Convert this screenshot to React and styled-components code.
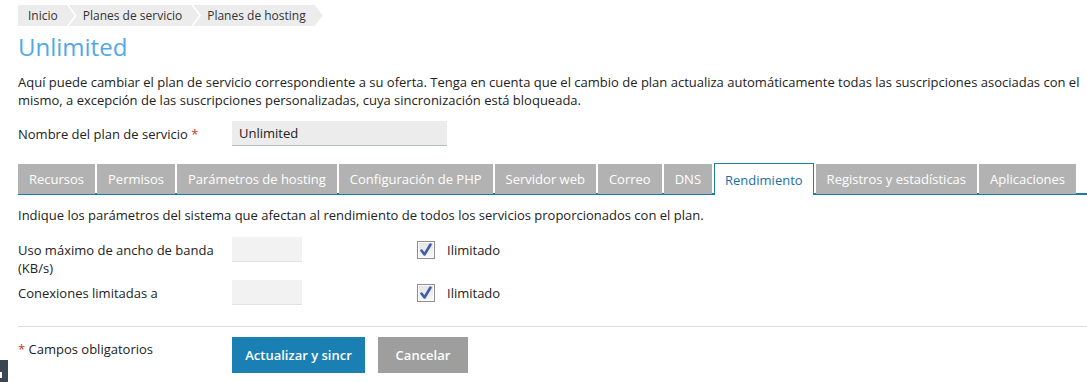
import React from "react";
import styled, { createGlobalStyle } from "styled-components";

const Global = createGlobalStyle`
  html, body { margin: 0; padding: 0; background: #fff; }
  body {
    font-family: "Open Sans", "Noto Sans", sans-serif;
    font-size: 13px;
    color: #222;
    overflow: hidden;
  }
  * { box-sizing: border-box; }
`;

const Page = styled.div`
  width: 1087px;
  height: 382px;
  padding: 5px 0 0 18px;
  display: flex;
  flex-direction: column;
`;

const Crumbs = styled.nav`
  display: flex;
  height: 21px;
`;

const Crumb = styled.span`
  display: flex;
  align-items: center;
  height: 21px;
  font-size: 12px;
  color: #333;
  background: #ececec;
  padding: 0 17px 0 ${(p) => (p.$first ? 10 : 14)}px;
  margin-left: ${(p) => (p.$first ? 0 : -6)}px;
  clip-path: ${(p) =>
    p.$first
      ? "polygon(0 0, calc(100% - 8px) 0, 100% 50%, calc(100% - 8px) 100%, 0 100%)"
      : "polygon(0 0, calc(100% - 8px) 0, 100% 50%, calc(100% - 8px) 100%, 0 100%, 8px 50%)"};
`;

const Title = styled.h1`
  margin: 6px 0 0;
  font-size: 24px;
  font-weight: 400;
  line-height: 30px;
  color: #52a9e6;
`;

const Intro = styled.p`
  margin: 11px 0 0;
  line-height: 18px;
  padding-right: 3px;
`;

const NameRow = styled.div`
  display: flex;
  align-items: center;
  margin-top: 12px;
`;

const Label = styled.label`
  width: 214px;
  flex: none;
  line-height: 18px;
  padding-right: 6px;
`;

const Req = styled.span`
  color: #d0332b;
`;

const TextInput = styled.div`
  width: ${(p) => p.$w}px;
  height: 25px;
  background: ${(p) => (p.$light ? "#f2f2f2" : "#ececec")};
  border-bottom: 1px solid ${(p) => (p.$light ? "#e2e2e2" : "#b4bcc4")};
  padding: 0 7px;
  display: flex;
  align-items: center;
  flex: none;
`;

const Tabs = styled.div`
  display: flex;
  gap: 2px;
  margin-top: 17px;
  border-bottom: 2px solid #1a7bac;
  height: 32px;
`;

const Tab = styled.div`
  display: flex;
  align-items: center;
  padding: 0 ${(p) => (p.$active ? 10 : 11)}px;
  color: ${(p) => (p.$active ? "#1a6fa0" : "#fff")};
  background: ${(p) => (p.$active ? "#fff" : "#b2b2b2")};
  border: ${(p) => (p.$active ? "1px solid #1a7bac" : "none")};
  border-bottom: none;
  height: ${(p) => (p.$active ? 32 : 30)}px;
  margin-top: ${(p) => (p.$active ? 0 : 1)}px;
  margin-bottom: ${(p) => (p.$active ? -2 : 0)}px;
  white-space: nowrap;
`;

const Desc = styled.p`
  margin: 11px 0 0;
  line-height: 18px;
`;

const Rows = styled.div`
  margin-top: 13px;
  display: flex;
  flex-direction: column;
  gap: 3px;
`;

const Row = styled.div`
  display: flex;
  align-items: flex-start;
`;

const RowLabel = styled(Label)`
  padding-top: 4px;
  padding-right: 4px;
`;

const InputCell = styled.div`
  width: 185px;
  flex: none;
`;

const Check = styled.span`
  display: flex;
  align-items: center;
  gap: 12px;
  padding-top: 4px;
  line-height: 18px;
`;

const Box = styled.span`
  width: 18px;
  height: 18px;
  border: 1px solid #8f8f8f;
  background: linear-gradient(#e4e4e4, #f8f8f8);
  box-shadow: inset 0 0 0 1px #fdfdfd;
  display: flex;
  align-items: center;
  justify-content: center;
`;

const Rule = styled.hr`
  margin: 21px 0 0;
  border: none;
  border-top: 1px solid #dcdcdc;
`;

const Footer = styled.div`
  display: flex;
  align-items: flex-start;
  margin-top: 10px;
`;

const FootLabel = styled.span`
  width: 214px;
  padding-top: 3px;
  line-height: 18px;
`;

const Buttons = styled.div`
  display: flex;
  gap: 13px;
`;

const Button = styled.button`
  height: 36px;
  width: ${(p) => p.$w}px;
  border: none;
  font-family: inherit;
  font-size: 13px;
  font-weight: 600;
  color: #fff;
  background: ${(p) => (p.$primary ? "#1a7fb2" : "#9e9e9e")};
  padding: 0;
`;

const Widget = styled.div`
  position: fixed;
  left: 0;
  bottom: 0;
  width: 8px;
  height: 22px;
  background: #3a4653;
  &::after {
    content: "";
    position: absolute;
    left: 0;
    top: 12px;
    width: 2px;
    height: 6px;
    background: #fff;
  }
`;

const CheckMark = () => (
  <svg width="16" height="16" viewBox="0 0 16 16">
    <path d="M3.5 8.5 L6.5 12.5 L12.5 2.5" fill="none" stroke="#3d5ea8" strokeWidth="2.6" strokeLinecap="round" strokeLinejoin="round" />
  </svg>
);

const tabs = [
  "Recursos",
  "Permisos",
  "Parámetros de hosting",
  "Configuración de PHP",
  "Servidor web",
  "Correo",
  "DNS",
  "Rendimiento",
  "Registros y estadísticas",
  "Aplicaciones",
];

export default function App() {
  return (
    <>
      <Global />
      <Page>
        <Crumbs>
          <Crumb $first>Inicio</Crumb>
          <Crumb>Planes de servicio</Crumb>
          <Crumb>Planes de hosting</Crumb>
        </Crumbs>
        <Title>Unlimited</Title>
        <Intro>
          Aquí puede cambiar el plan de servicio correspondiente a su oferta. Tenga en cuenta que el cambio de plan actualiza automáticamente todas las suscripciones asociadas con el mismo, a excepción de las suscripciones personalizadas, cuya sincronización está bloqueada.
        </Intro>
        <NameRow>
          <Label>
            Nombre del plan de servicio <Req>*</Req>
          </Label>
          <TextInput $w={215}>Unlimited</TextInput>
        </NameRow>
        <Tabs>
          {tabs.map((t) => (
            <Tab key={t} $active={t === "Rendimiento"}>
              {t}
            </Tab>
          ))}
        </Tabs>
        <Desc>Indique los parámetros del sistema que afectan al rendimiento de todos los servicios proporcionados con el plan.</Desc>
        <Rows>
          <Row>
            <RowLabel>Uso máximo de ancho de banda (KB/s)</RowLabel>
            <InputCell>
              <TextInput $w={70} $light />
            </InputCell>
            <Check>
              <Box>
                <CheckMark />
              </Box>
              Ilimitado
            </Check>
          </Row>
          <Row>
            <RowLabel>Conexiones limitadas a</RowLabel>
            <InputCell>
              <TextInput $w={70} $light />
            </InputCell>
            <Check>
              <Box>
                <CheckMark />
              </Box>
              Ilimitado
            </Check>
          </Row>
        </Rows>
        <Rule />
        <Footer>
          <FootLabel>
            <Req>*</Req> Campos obligatorios
          </FootLabel>
          <Buttons>
            <Button $primary $w={133}>Actualizar y sincr</Button>
            <Button $w={90}>Cancelar</Button>
          </Buttons>
        </Footer>
      </Page>
      <Widget />
    </>
  );
}
